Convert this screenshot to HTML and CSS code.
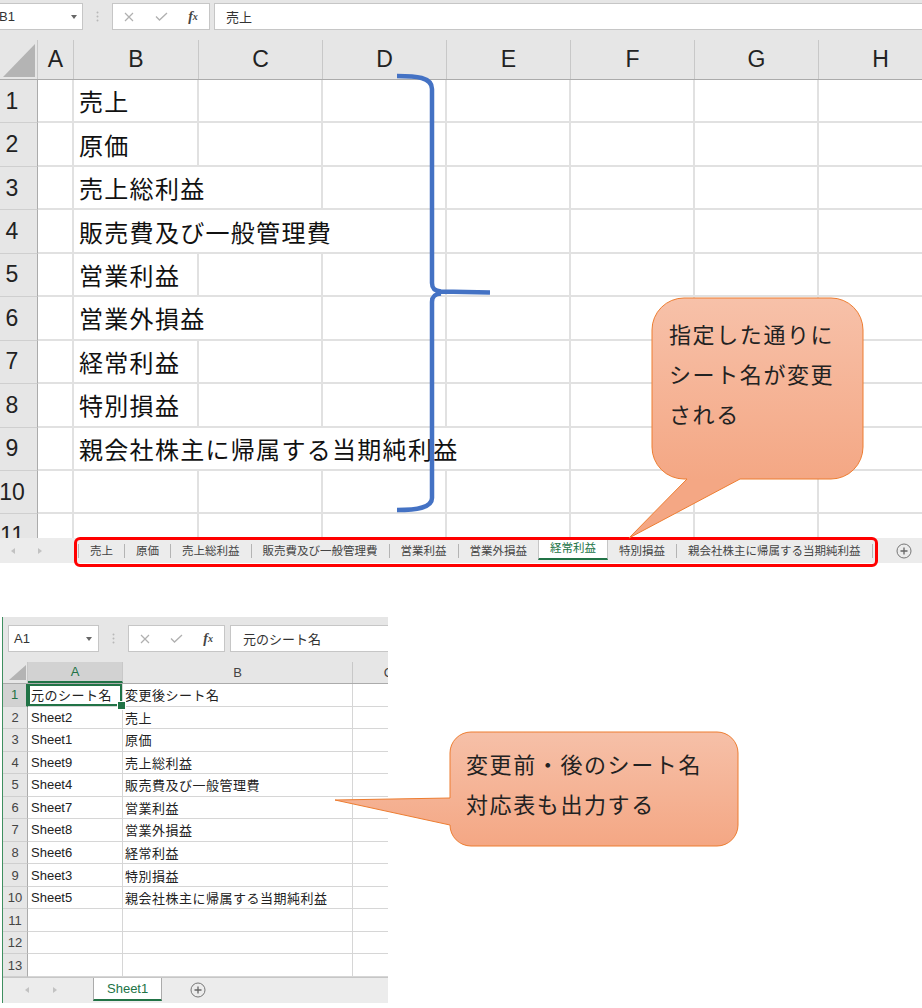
FILE: index.html
```html
<!DOCTYPE html>
<html lang="ja">
<head>
<meta charset="utf-8">
<title>Sheet rename</title>
<link rel="stylesheet" href="styles.css">
</head>
<body>
<section class="xl xl-top">
  <div class="fbar">
    <div class="namebox"><span class="nb-text">B1</span><i class="dd"></i></div>
    <div class="grip"><svg width="3" height="11" viewBox="0 0 3 11"><circle cx="1.5" cy="1.5" r="1" fill="#b8b8b8"/><circle cx="1.5" cy="5.5" r="1" fill="#b8b8b8"/><circle cx="1.5" cy="9.5" r="1" fill="#b8b8b8"/></svg></div>
    <div class="fxbox">
      <span class="fxi"><svg width="10" height="10" viewBox="0 0 10 10"><path d="M1 1L9 9M9 1L1 9" stroke="#b0b0b0" stroke-width="1.2"/></svg></span>
      <span class="fxi"><svg width="13" height="9" viewBox="0 0 13 9"><path d="M1 4.5L4.5 8L12 1" fill="none" stroke="#b0b0b0" stroke-width="1.3"/></svg></span>
      <span class="fxi fx">f<small>x</small></span>
    </div>
    <div class="finput jp">売上</div>
  </div>
  <div class="tgrid">
    <div class="trow thead">
      <div class="corner"><svg width="37" height="39" viewBox="0 0 37 39"><polygon points="3,37 35,37 35,4" fill="#b4b4b4"/></svg></div>
      <div class="ch">A</div><div class="ch">B</div><div class="ch">C</div><div class="ch">D</div><div class="ch">E</div><div class="ch">F</div><div class="ch">G</div><div class="ch">H</div>
    </div>
    <div class="trow"><div class="rh">1</div><div class="c"></div><div class="c t">売上</div><div class="c"></div><div class="c"></div><div class="c"></div><div class="c"></div><div class="c"></div><div class="c"></div></div>
    <div class="trow"><div class="rh">2</div><div class="c"></div><div class="c t">原価</div><div class="c"></div><div class="c"></div><div class="c"></div><div class="c"></div><div class="c"></div><div class="c"></div></div>
    <div class="trow"><div class="rh">3</div><div class="c"></div><div class="c t s2">売上総利益</div><div class="c"></div><div class="c"></div><div class="c"></div><div class="c"></div><div class="c"></div></div>
    <div class="trow"><div class="rh">4</div><div class="c"></div><div class="c t s3">販売費及び一般管理費</div><div class="c"></div><div class="c"></div><div class="c"></div><div class="c"></div></div>
    <div class="trow"><div class="rh">5</div><div class="c"></div><div class="c t">営業利益</div><div class="c"></div><div class="c"></div><div class="c"></div><div class="c"></div><div class="c"></div><div class="c"></div></div>
    <div class="trow"><div class="rh">6</div><div class="c"></div><div class="c t s2">営業外損益</div><div class="c"></div><div class="c"></div><div class="c"></div><div class="c"></div><div class="c"></div></div>
    <div class="trow"><div class="rh">7</div><div class="c"></div><div class="c t">経常利益</div><div class="c"></div><div class="c"></div><div class="c"></div><div class="c"></div><div class="c"></div><div class="c"></div></div>
    <div class="trow"><div class="rh">8</div><div class="c"></div><div class="c t">特別損益</div><div class="c"></div><div class="c"></div><div class="c"></div><div class="c"></div><div class="c"></div><div class="c"></div></div>
    <div class="trow"><div class="rh">9</div><div class="c"></div><div class="c t s4">親会社株主に帰属する当期純利益</div><div class="c"></div><div class="c"></div><div class="c"></div></div>
    <div class="trow"><div class="rh">10</div><div class="c"></div><div class="c"></div><div class="c"></div><div class="c"></div><div class="c"></div><div class="c"></div><div class="c"></div><div class="c"></div></div>
    <div class="trow"><div class="rh">11</div><div class="c"></div><div class="c"></div><div class="c"></div><div class="c"></div><div class="c"></div><div class="c"></div><div class="c"></div><div class="c"></div></div>
  </div>
  <div class="tabbar">
    <div class="nav"><i class="tri l"></i><i class="tri r"></i></div>
    <div class="tabs jp">
      <i class="sep"></i><span class="tab">売上</span>
      <i class="sep"></i><span class="tab">原価</span>
      <i class="sep"></i><span class="tab">売上総利益</span>
      <i class="sep"></i><span class="tab">販売費及び一般管理費</span>
      <i class="sep"></i><span class="tab">営業利益</span>
      <i class="sep"></i><span class="tab">営業外損益</span>
      <span class="tab on">経常利益</span>
      <span class="tab">特別損益</span>
      <i class="sep"></i><span class="tab">親会社株主に帰属する当期純利益</span>
      <i class="sep"></i>
    </div>
    <svg class="plus" width="16" height="16" viewBox="0 0 16 16"><circle cx="8" cy="8" r="7" fill="none" stroke="#777" stroke-width="1"/><path d="M4.5 8H11.5M8 4.5V11.5" stroke="#666" stroke-width="1.3"/></svg>
  </div>
</section>

<section class="xl xl-bottom">
  <div class="fbar">
    <div class="namebox"><span class="nb-text">A1</span><i class="dd"></i></div>
    <div class="grip"><svg width="3" height="11" viewBox="0 0 3 11"><circle cx="1.5" cy="1.5" r="1" fill="#b8b8b8"/><circle cx="1.5" cy="5.5" r="1" fill="#b8b8b8"/><circle cx="1.5" cy="9.5" r="1" fill="#b8b8b8"/></svg></div>
    <div class="fxbox">
      <span class="fxi"><svg width="10" height="10" viewBox="0 0 10 10"><path d="M1 1L9 9M9 1L1 9" stroke="#b0b0b0" stroke-width="1.2"/></svg></span>
      <span class="fxi"><svg width="13" height="9" viewBox="0 0 13 9"><path d="M1 4.5L4.5 8L12 1" fill="none" stroke="#b0b0b0" stroke-width="1.3"/></svg></span>
      <span class="fxi fx">f<small>x</small></span>
    </div>
    <div class="finput jp">元のシート名</div>
  </div>
  <div class="bgrid">
    <div class="brow bhead">
      <div class="bcorner"><svg width="24" height="21" viewBox="0 0 24 21"><polygon points="6,18 23,18 23,3" fill="#b4b4b4"/></svg></div>
      <div class="bch sel">A</div><div class="bch">B</div><div class="bch">C</div>
    </div>
    <div class="brow"><div class="brh sel">1</div><div class="bc jp sel">元のシート名</div><div class="bc jp b">変更後シート名</div><div class="bc"></div></div>
    <div class="brow"><div class="brh">2</div><div class="bc">Sheet2</div><div class="bc jp b">売上</div><div class="bc"></div></div>
    <div class="brow"><div class="brh">3</div><div class="bc">Sheet1</div><div class="bc jp b">原価</div><div class="bc"></div></div>
    <div class="brow"><div class="brh">4</div><div class="bc">Sheet9</div><div class="bc jp b">売上総利益</div><div class="bc"></div></div>
    <div class="brow"><div class="brh">5</div><div class="bc">Sheet4</div><div class="bc jp b">販売費及び一般管理費</div><div class="bc"></div></div>
    <div class="brow"><div class="brh">6</div><div class="bc">Sheet7</div><div class="bc jp b">営業利益</div><div class="bc"></div></div>
    <div class="brow"><div class="brh">7</div><div class="bc">Sheet8</div><div class="bc jp b">営業外損益</div><div class="bc"></div></div>
    <div class="brow"><div class="brh">8</div><div class="bc">Sheet6</div><div class="bc jp b">経常利益</div><div class="bc"></div></div>
    <div class="brow"><div class="brh">9</div><div class="bc">Sheet3</div><div class="bc jp b">特別損益</div><div class="bc"></div></div>
    <div class="brow"><div class="brh">10</div><div class="bc">Sheet5</div><div class="bc jp b">親会社株主に帰属する当期純利益</div><div class="bc"></div></div>
    <div class="brow"><div class="brh">11</div><div class="bc"></div><div class="bc"></div><div class="bc"></div></div>
    <div class="brow"><div class="brh">12</div><div class="bc"></div><div class="bc"></div><div class="bc"></div></div>
    <div class="brow"><div class="brh">13</div><div class="bc"></div><div class="bc"></div><div class="bc"></div></div>
  </div>
  <div class="tabbar">
    <div class="nav"><i class="tri l"></i><i class="tri r"></i></div>
    <span class="tab on">Sheet1</span>
    <svg class="plus" width="16" height="16" viewBox="0 0 16 16"><circle cx="8" cy="8" r="7" fill="none" stroke="#777" stroke-width="1"/><path d="M4.5 8H11.5M8 4.5V11.5" stroke="#666" stroke-width="1.3"/></svg>
  </div>
</section>

<div class="redbox"></div>

<svg class="overlay" width="922" height="1008" viewBox="0 0 922 1008">
  <defs>
    <linearGradient id="g1" x1="0" y1="298" x2="0" y2="480" gradientUnits="userSpaceOnUse">
      <stop offset="0" stop-color="#f7c1a9"/>
      <stop offset="1" stop-color="#f4a784"/>
    </linearGradient>
    <linearGradient id="g2" x1="0" y1="732" x2="0" y2="846" gradientUnits="userSpaceOnUse">
      <stop offset="0" stop-color="#f6c0a8"/>
      <stop offset="1" stop-color="#f4a784"/>
    </linearGradient>
  </defs>
  <path d="M397 76 C416 76 432 77 432 89 V283 C432 289 435 291 441 291.5 L490 292.5 M441 293.5 C435 294 432 296 432 302 V498 C432 508 416 510 397 510" fill="none" stroke="#4472c4" stroke-width="4.5"/>
  <path d="M684 298 H831 A32 32 0 0 1 863 330 V447 A32 32 0 0 1 831 479 H740 L629 538 L687 479 H684 A32 32 0 0 1 652 447 V330 A32 32 0 0 1 684 298 Z" fill="url(#g1)" stroke="#ed7d31" stroke-width="1"/>
  <path d="M471 732 H717 A21 21 0 0 1 738 753 V825 A21 21 0 0 1 717 846 H471 A21 21 0 0 1 450 825 L335 800 L450 798 V753 A21 21 0 0 1 471 732 Z" fill="url(#g2)" stroke="#ed7d31" stroke-width="1"/>
</svg>
<div class="note note1 jp">指定した通りに<br>シート名が変更<br>される</div>
<div class="note note2 jp">変更前・後のシート名<br>対応表も出力する</div>
</body>
</html>
```

FILE: styles.css
```css
* { box-sizing: border-box; margin: 0; padding: 0; }
html, body { background: #fff; }
body {
  position: relative;
  width: 922px;
  height: 1008px;
  overflow: hidden;
  font-family: "Liberation Sans", "Noto Sans CJK JP", sans-serif;
  color: #222;
}
.jp { font-family: "Noto Sans CJK JP", "Liberation Sans", sans-serif; }

/* ---------- shared excel chrome ---------- */
.xl { background: #e6e6e6; }
.fbar { display: flex; align-items: flex-start; }
.namebox {
  height: 27px;
  background: #fff;
  border: 1px solid #c6c6c6;
  display: flex;
  align-items: center;
  justify-content: space-between;
  font-size: 13px;
  color: #333;
}
.dd {
  width: 0; height: 0;
  border-left: 3.5px solid transparent;
  border-right: 3.5px solid transparent;
  border-top: 4px solid #666;
}
.grip { width: 29px; height: 27px; display: flex; align-items: center; justify-content: center; }
.fxbox {
  height: 27px;
  background: #fff;
  border: 1px solid #c6c6c6;
  display: flex;
  align-items: center;
}
.fxi { width: 33px; display: flex; justify-content: center; align-items: center; }
.fx {
  font-family: "Liberation Serif", serif;
  font-style: italic;
  font-weight: bold;
  font-size: 14px;
  color: #444;
  line-height: 1;
}
.fx small { font-size: 10px; }
.finput {
  flex: 1;
  height: 27px;
  background: #fff;
  border: 1px solid #c6c6c6;
  display: flex;
  align-items: center;
  padding-left: 11px;
  font-size: 13px;
  color: #333;
}
.tabbar { display: flex; align-items: center; background: #ececec; }
.nav { display: flex; align-items: center; }
.tri { width: 0; height: 0; border-top: 3.5px solid transparent; border-bottom: 3.5px solid transparent; }
.tri.l { border-right: 4px solid #c2c2c2; }
.tri.r { border-left: 4px solid #c2c2c2; }
.tabs { display: flex; align-items: center; height: 100%; }
.tab { padding: 0 11px; font-size: 11.5px; line-height: 1; color: #444; white-space: nowrap; }
.sep { width: 1px; height: 14px; background: #b4b4b4; }
.tab.on {
  align-self: flex-start;
  display: flex;
  align-items: center;
  background: #fff;
  border-left: 1px solid #c6c6c6;
  border-right: 1px solid #c6c6c6;
  border-bottom: 2px solid #217346;
  color: #217346;
}

/* ---------- top sheet ---------- */
.xl-top { width: 922px; }
.xl-top .fbar { height: 40px; padding-top: 3px; }
.xl-top .namebox { width: 83px; border-left: 0; padding-right: 5px; }
.xl-top .nb-text { margin-left: -1px; }
.xl-top .fxbox { width: 98px; }
.xl-top .finput { margin-left: 4px; border-right: 0; }

.tgrid { height: 498px; overflow: hidden; background: #fff; }
.trow {
  display: grid;
  grid-template-columns: 38px 36px 125px 124px 124px 124px 124px 124px 124px;
  height: 43.45px;
}
.thead { height: 40px; background: #e6e6e6; border-bottom: 1px solid #ababab; }
.corner { border-right: 1px solid #c8c8c8; }
.corner svg { display: block; }
.ch {
  display: flex; align-items: center; justify-content: center;
  font-size: 23px; color: #222;
  border-right: 1px solid #c8c8c8;
}
.rh {
  background: #e6e6e6;
  border-right: 1px solid #ababab;
  border-bottom: 1px solid #cfcfcf;
  display: flex; align-items: center; justify-content: center;
  padding-right: 13px;
  font-size: 23px;
  color: #222;
}
.c {
  border-right: 2px solid #e1e1e1;
  border-bottom: 2px solid #e1e1e1;
  display: flex; align-items: center;
  white-space: nowrap;
}
.t {
  font-family: "Noto Sans CJK JP", sans-serif;
  font-size: 24px;
  letter-spacing: 1.3px;
  padding-left: 5px;
  color: #111;
}
.s2 { grid-column: span 2; }
.s3 { grid-column: span 3; }
.s4 { grid-column: span 4; }

.xl-top .tabbar { height: 25px; }
.xl-top .nav { width: 78px; padding-left: 11px; gap: 23px; }
.xl-top .tab.on { height: 22px; }
.plus { margin-left: auto; margin-right: 10px; }

/* ---------- bottom sheet ---------- */
.xl-bottom {
  margin-top: 54px;
  margin-left: 2px;
  width: 386px;
  height: 386px;
  border-left: 1px solid #3f8f60;
  overflow: hidden;
}
.xl-bottom .fbar { height: 45px; padding-top: 8px; }
.xl-bottom .namebox { width: 91px; margin-left: 5px; padding: 0 6px 0 5px; }
.xl-bottom .fxbox { width: 97px; }
.xl-bottom .fxi { width: 32px; }
.xl-bottom .finput { margin-left: 5px; border-right: 0; padding-left: 12px; }

.bgrid { background: #fff; }
.brow {
  display: grid;
  grid-template-columns: 25px 95px 230px 72px;
  height: 22.54px;
}
.bhead { height: 22px; background: #e6e6e6; border-bottom: 1px solid #ababab; }
.bcorner { border-right: 1px solid #c8c8c8; }
.bcorner svg { display: block; }
.bch {
  display: flex; align-items: center; justify-content: center;
  font-size: 13px; color: #444;
  border-right: 1px solid #c8c8c8;
}
.bch.sel { background: #d2d2d2; color: #217346; border-bottom: 2px solid #217346; }
.brh {
  background: #e6e6e6;
  border-right: 1px solid #ababab;
  border-bottom: 1px solid #cfcfcf;
  display: flex; align-items: center; justify-content: center;
  font-size: 13px; color: #444;
}
.brh.sel { background: #d2d2d2; color: #217346; border-right: 2px solid #217346; }
.bc {
  border-right: 1px solid #d6d6d6;
  border-bottom: 1px solid #d6d6d6;
  display: flex; align-items: center;
  padding-left: 3px;
  font-size: 13px;
  color: #222;
  white-space: nowrap;
}
.bc.jp { letter-spacing: 0.5px; }
.bc.b { padding-left: 2px; }
.bc.sel { position: relative; box-shadow: inset 0 0 0 2px #217346; }
.bc.sel::after {
  content: "";
  position: absolute;
  right: -4px; bottom: -4px;
  width: 7px; height: 7px;
  background: #217346;
  border: 1px solid #fff;
  z-index: 1;
}
.xl-bottom .tabbar { height: 26px; border-top: 1px solid #c6c6c6; }
.xl-bottom .nav { width: 90px; padding-left: 22px; gap: 24px; }
.xl-bottom .tab.on {
  height: 23px;
  padding: 0 13px;
  font-size: 13px;
  font-family: "Liberation Sans", sans-serif;
  border-left-color: #ababab;
  border-right-color: #ababab;
}
.xl-bottom .plus { margin-left: 28px; margin-right: 0; }

/* ---------- annotations ---------- */
.redbox {
  position: absolute;
  left: 74px; top: 537px;
  width: 804px; height: 30px;
  border: 3px solid #ff0000;
  border-radius: 6px;
}
.overlay { position: absolute; left: 0; top: 0; pointer-events: none; }
.note {
  position: absolute;
  font-size: 22px;
  line-height: 40px;
  letter-spacing: 1.6px;
  color: #222;
  white-space: nowrap;
}
.note1 { left: 669px; top: 313px; }
.note2 { left: 466px; top: 743px; }
```
